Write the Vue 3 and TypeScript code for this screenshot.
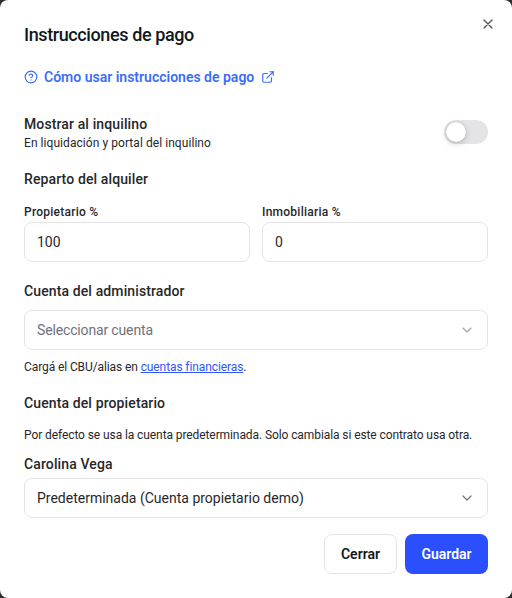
<script setup lang="ts">
const title = 'Instrucciones de pago'
</script>

<template>
  <div class="modal">
    <button class="close" aria-label="Cerrar">
      <svg width="16" height="16" viewBox="0 0 24 24" fill="none" stroke="currentColor" stroke-width="2" stroke-linecap="round"><path d="M18 6 6 18M6 6l12 12" /></svg>
    </button>
    <h2 class="title">{{ title }}</h2>
    <a class="help">
      <svg width="14" height="14" viewBox="0 0 24 24" fill="none" stroke="currentColor" stroke-width="2" stroke-linecap="round" stroke-linejoin="round"><circle cx="12" cy="12" r="10" /><path d="M9.09 9a3 3 0 0 1 5.83 1c0 2-3 3-3 3" /><path d="M12 17h.01" /></svg>
      <span>Cómo usar instrucciones de pago</span>
      <svg class="ext" width="14" height="14" viewBox="0 0 24 24" fill="none" stroke="currentColor" stroke-width="2" stroke-linecap="round" stroke-linejoin="round"><path d="M15 3h6v6" /><path d="M10 14 21 3" /><path d="M18 13v6a2 2 0 0 1-2 2H5a2 2 0 0 1-2-2V8a2 2 0 0 1 2-2h6" /></svg>
    </a>
    <div class="toggle-row">
      <div>
        <div class="heading">Mostrar al inquilino</div>
        <div class="small sub">En liquidación y portal del inquilino</div>
      </div>
      <div class="switch"><span class="knob"></span></div>
    </div>
    <div class="heading reparto">Reparto del alquiler</div>
    <div class="split">
      <div>
        <div class="field-label">Propietario %</div>
        <div class="control">100</div>
      </div>
      <div>
        <div class="field-label">Inmobiliaria %</div>
        <div class="control">0</div>
      </div>
    </div>
    <div class="heading admin">Cuenta del administrador</div>
    <div class="control select placeholder">
      <span>Seleccionar cuenta</span>
      <svg width="16" height="16" viewBox="0 0 24 24" fill="none" stroke="currentColor" stroke-width="1.6" stroke-linecap="round" stroke-linejoin="round"><path d="m6 9 6 6 6-6" /></svg>
    </div>
    <div class="small hint">Cargá el CBU/alias en <a class="inline-link">cuentas financieras</a>.</div>
    <div class="heading owner">Cuenta del propietario</div>
    <div class="small owner-note">Por defecto se usa la cuenta predeterminada. Solo cambiala si este contrato usa otra.</div>
    <div class="heading person">Carolina Vega</div>
    <div class="control select">
      <span>Predeterminada (Cuenta propietario demo)</span>
      <svg class="chev" width="16" height="16" viewBox="0 0 24 24" fill="none" stroke="currentColor" stroke-width="1.8" stroke-linecap="round" stroke-linejoin="round"><path d="m6 9 6 6 6-6" /></svg>
    </div>
    <div class="actions">
      <button class="btn ghost">Cerrar</button>
      <button class="btn primary">Guardar</button>
    </div>
  </div>
</template>

<style>
html, body { margin: 0; background: #2e2e2e; }
</style>

<style scoped>
* { box-sizing: border-box; }
.modal {
  position: relative;
  width: 512px;
  height: 598px;
  background: #fff;
  border-radius: 8px;
  padding: 21px 24px 24px;
  font-family: Roboto, "Noto Sans", sans-serif;
  color: #18181b;
  display: flex;
  flex-direction: column;
  overflow: hidden;
}
.close {
  position: absolute;
  top: 16px;
  right: 16px;
  width: 16px;
  height: 16px;
  padding: 0;
  border: 0;
  background: none;
  color: #52525b;
  display: flex;
}
.title { margin: 0; font-size: 18px; line-height: 28px; font-weight: 500; color: #11181c; letter-spacing: -0.4px; }
.help {
  margin-top: 18px;
  display: flex;
  align-items: center;
  gap: 6px;
  height: 20px;
  font-size: 14px;
  font-weight: 600;
  color: #3b6ef6;
}
.ext { margin-left: 1px; }
.toggle-row { margin-top: 27px; display: flex; justify-content: space-between; align-items: flex-start; }
.heading { font-size: 14px; line-height: 20px; font-weight: 500; color: #27272a; letter-spacing: 0.12px; }
.small { font-size: 12px; line-height: 16px; color: #27272a; letter-spacing: -0.1px; white-space: nowrap; }
.small.sub { margin-top: 1px; letter-spacing: 0.06px; }
.switch {
  width: 44px; height: 24px; border-radius: 12px; background: #e4e4e7;
  padding: 2px; display: flex; align-items: center; margin-top: 6px;
}
.knob {
  width: 20px; height: 20px; border-radius: 50%; background: #fff;
  box-shadow: 0 2px 6px rgba(0,0,0,.18), 0 0 1px rgba(0,0,0,.3);
}
.reparto { margin-top: 18px; }
.split { margin-top: 15px; display: grid; grid-template-columns: 1fr 1fr; gap: 12px; }
.field-label { font-size: 12px; line-height: 16px; font-weight: 500; color: #27272a; margin-bottom: 2px; letter-spacing: 0.25px; }
.control {
  height: 40px;
  flex-shrink: 0;
  border: 1px solid #e4e4e7;
  border-radius: 8px;
  padding: 0 12px;
  display: flex;
  align-items: center;
  font-size: 14px;
  color: #27272a;
  background: #fff;
}
.select { justify-content: space-between; }
.select svg { color: #a1a1aa; }
.select .chev { color: #71717a; }
.placeholder { color: #71717a; letter-spacing: -0.15px; }
.admin { margin-top: 19px; margin-bottom: 9px; }
.hint { margin-top: 9px; }
.inline-link { color: #2f55ff; text-decoration: underline; }
.owner { margin-top: 18px; }
.owner-note { margin-top: 14px; letter-spacing: -0.09px; }
.person { margin-top: 11px; margin-bottom: 4px; }
.actions { margin-top: 16px; display: flex; justify-content: flex-end; gap: 8px; }
.btn {
  height: 40px; border-radius: 8px; font-family: inherit; font-size: 14px; font-weight: 600;
}
.ghost { width: 73px; background: #fff; border: 1px solid #e4e4e7; color: #11181c; }
.primary { width: 83px; background: #2b4fff; border: 0; color: #fff; }
</style>
